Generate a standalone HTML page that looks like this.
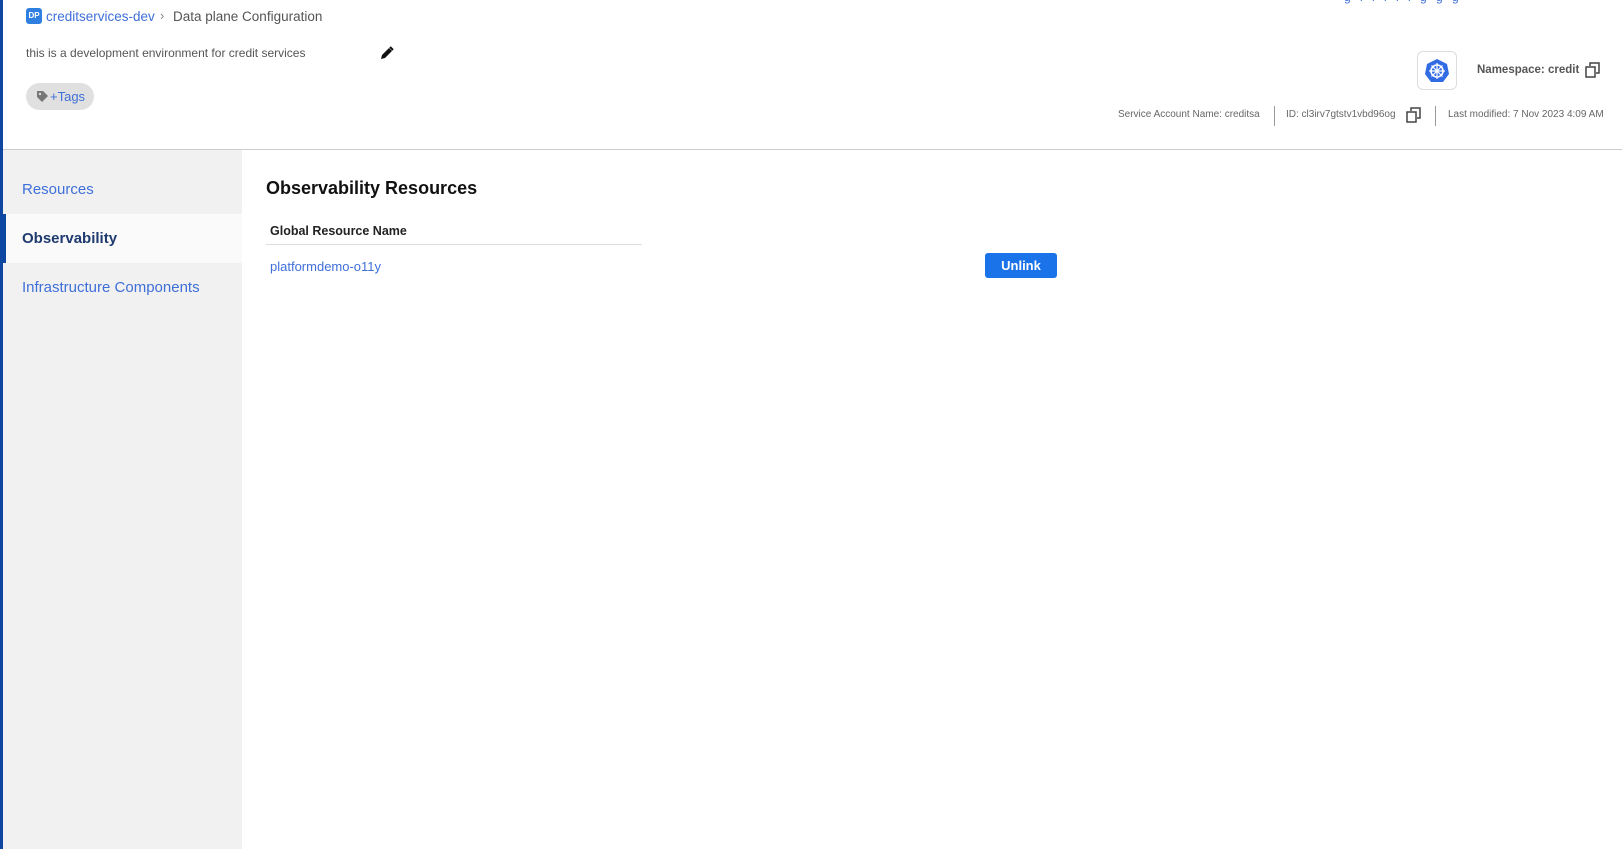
<!DOCTYPE html>
<html><head><meta charset="utf-8"><style>
*{margin:0;padding:0;box-sizing:border-box}
body{width:1622px;height:849px;overflow:hidden;background:#fff;font-family:"Liberation Sans",sans-serif;position:relative}
.a{position:absolute;white-space:nowrap}
</style></head><body>
<div class="a" style="left:0;top:0;width:3px;height:849px;background:#0d47a1"></div>
<div class="a" style="left:1344px;top:-10px;font-size:12px;color:#3b6fd8;letter-spacing:3px">g  l      l l  l   l  g  g     g</div>

<div class="a" style="left:26px;top:8px;width:16px;height:16px;background:#2f7fe0;border-radius:3px;color:#fff;font-size:8px;font-weight:bold;text-align:center;line-height:16px">DP</div>
<div class="a" style="left:46px;top:9px;font-size:13.5px;color:#3f6fd9">creditservices-dev</div>
<div class="a" style="left:160px;top:8px;font-size:13px;color:#888">&#8250;</div>
<div class="a" style="left:173px;top:9px;font-size:13.5px;color:#555">Data plane Configuration</div>
<div class="a" style="left:26px;top:46px;font-size:12px;color:#555">this is a development environment for credit services</div>
<svg class="a" style="left:380px;top:46px" width="14" height="14" viewBox="0 0 14 14"><path d="M1 13l1-4 7-7 3 3-7 7z" fill="#111"/><path d="M10 1l3 3" stroke="#111" stroke-width="2"/></svg>
<div class="a" style="left:26px;top:83px;width:68px;height:27px;background:#e0e0e0;border-radius:14px"></div>
<svg class="a" style="left:36px;top:90px" width="13" height="13" viewBox="0 0 13 13"><path d="M1 1h6l5 5-6 6-5-5z" fill="#777"/><circle cx="4" cy="4" r="1.2" fill="#e0e0e0"/></svg>
<div class="a" style="left:50px;top:89px;font-size:13px;color:#3f6fd9">+Tags</div>

<div class="a" style="left:1417px;top:51px;width:40px;height:39px;border:1px solid #ddd;border-radius:6px"></div>
<svg class="a" style="left:1424px;top:58px" width="26" height="26" viewBox="0 0 26 26"><polygon points="13,1 23,6 25,16 19,24 7,24 1,16 3,6" fill="#326ce5"/><circle cx="13" cy="13" r="6" fill="none" stroke="#fff" stroke-width="1.6"/><circle cx="13" cy="13" r="1.5" fill="#fff"/><path d="M13 5v16M5 13h16M7.5 7.5l11 11M18.5 7.5l-11 11" stroke="#fff" stroke-width="1.2"/></svg>
<div class="a" style="left:1477px;top:64px;font-size:11.5px;font-weight:bold;color:#555">Namespace: credit</div>
<svg class="a" style="left:1585px;top:62px" width="15" height="16" viewBox="0 0 15 16"><rect x="1" y="5" width="9" height="10" fill="none" stroke="#444" stroke-width="1.5"/><path d="M5 4V1h9v10h-3" fill="none" stroke="#444" stroke-width="1.5"/></svg>

<div class="a" style="left:1118px;top:109px;font-size:10px;color:#666">Service Account Name: creditsa</div>
<div class="a" style="left:1274px;top:106px;width:1px;height:20px;background:#999"></div>
<div class="a" style="left:1286px;top:109px;font-size:10px;color:#666">ID: cl3irv7gtstv1vbd96og</div>
<svg class="a" style="left:1406px;top:107px" width="15" height="16" viewBox="0 0 15 16"><rect x="1" y="5" width="9" height="10" fill="none" stroke="#444" stroke-width="1.5"/><path d="M5 4V1h9v10h-3" fill="none" stroke="#444" stroke-width="1.5"/></svg>
<div class="a" style="left:1435px;top:106px;width:1px;height:20px;background:#999"></div>
<div class="a" style="left:1448px;top:109px;font-size:10px;color:#666">Last modified: 7 Nov 2023 4:09 AM</div>

<div class="a" style="left:3px;top:149px;width:1619px;height:1px;background:#ccc"></div>
<div class="a" style="left:3px;top:150px;width:239px;height:699px;background:#f1f1f1"></div>
<div class="a" style="left:3px;top:214px;width:239px;height:49px;background:#fafafa"></div>
<div class="a" style="left:0;top:214px;width:6px;height:49px;background:#0d47a1"></div>
<div class="a" style="left:22px;top:181px;font-size:15px;color:#3f6fd9">Resources</div>
<div class="a" style="left:22px;top:230px;font-size:15px;font-weight:bold;color:#1f3a6e">Observability</div>
<div class="a" style="left:22px;top:279px;font-size:15px;color:#3f6fd9">Infrastructure Components</div>

<div class="a" style="left:266px;top:178px;font-size:18px;font-weight:bold;color:#111">Observability Resources</div>
<div class="a" style="left:270px;top:224px;font-size:12.5px;font-weight:bold;color:#222">Global Resource Name</div>
<div class="a" style="left:266px;top:244px;width:376px;height:1px;background:#ddd"></div>
<div class="a" style="left:270px;top:259px;font-size:13px;color:#3f6fd9">platformdemo-o11y</div>
<div class="a" style="left:985px;top:253px;width:72px;height:25px;background:#1a73e8;border-radius:3px;color:#fff;font-size:13px;font-weight:bold;text-align:center;line-height:25px">Unlink</div>
</body></html>
